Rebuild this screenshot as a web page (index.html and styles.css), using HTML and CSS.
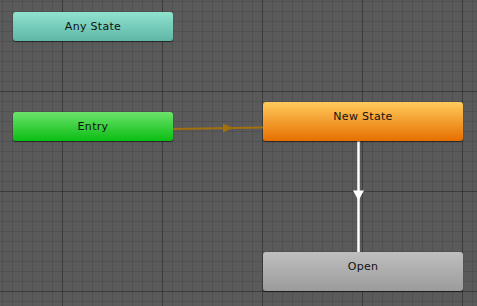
FILE: index.html
```html
<!DOCTYPE html>
<html lang="en">
<head>
    <meta charset="UTF-8">
    <title>Animator</title>
    <link rel="stylesheet" href="styles.css">
</head>
<body>
    <div class="graph">
        <!-- Transiciones -->
        <svg class="links" width="477" height="306" viewBox="0 0 477 306">
            <line x1="172" y1="129" x2="263" y2="127.5" stroke="#a2700c" stroke-width="2"/>
            <polygon points="223,123.5 233,128 223,132.5" fill="#a2700c"/>
            <line x1="358.5" y1="141" x2="358.5" y2="252" stroke="#ffffff" stroke-width="2.5"/>
            <polygon points="353,190.5 364,190.5 358.5,200.5" fill="#ffffff"/>
        </svg>

        <div class="node any-state">Any State</div>
        <div class="node entry">Entry</div>
        <div class="node state new-state">New State</div>
        <div class="node state open">Open</div>
    </div>
</body>
</html>
```

FILE: styles.css
```css
body {
    margin: 0;
    background-color: #5a5a5a;
    font-family: "DejaVu Sans", Verdana, sans-serif;
}

.graph {
    position: relative;
    width: 477px;
    height: 306px;
    overflow: hidden;
    background-color: #5a5a5a;
    background-image:
        linear-gradient(to right, rgba(0, 0, 0, 0.26) 1px, transparent 1px),
        linear-gradient(to bottom, rgba(0, 0, 0, 0.26) 1px, transparent 1px),
        linear-gradient(to right, rgba(0, 0, 0, 0.1) 1px, transparent 1px),
        linear-gradient(to bottom, rgba(0, 0, 0, 0.1) 1px, transparent 1px);
    background-size: 100px 100px, 100px 100px, 10px 10px, 10px 10px;
    background-position: 62px 0, 0 91px, 2px 0, 0 1px;
}

.links {
    position: absolute;
    left: 0;
    top: 0;
}

.node {
    position: absolute;
    box-sizing: border-box;
    display: flex;
    justify-content: center;
    align-items: center;
    font-size: 11px;
    letter-spacing: 0.3px;
    color: #111;
    border-radius: 3px;
    box-shadow: 0 1px 1px rgba(0, 0, 0, 0.55);
}

.any-state {
    left: 13px;
    top: 12px;
    width: 160px;
    height: 29px;
    background: linear-gradient(#8fe3cf, #5fb6a5);
}

.entry {
    left: 13px;
    top: 112px;
    width: 160px;
    height: 29px;
    background: linear-gradient(#6ce36c, #0bbd12);
}

.state {
    left: 263px;
    width: 200px;
    height: 39px;
    align-items: flex-start;
    padding-top: 8px;
}

.new-state {
    top: 102px;
    background: linear-gradient(#ffcb5c, #e66f00);
}

.open {
    top: 252px;
    background: linear-gradient(#bfbfbf, #9b9b9b);
}
```
